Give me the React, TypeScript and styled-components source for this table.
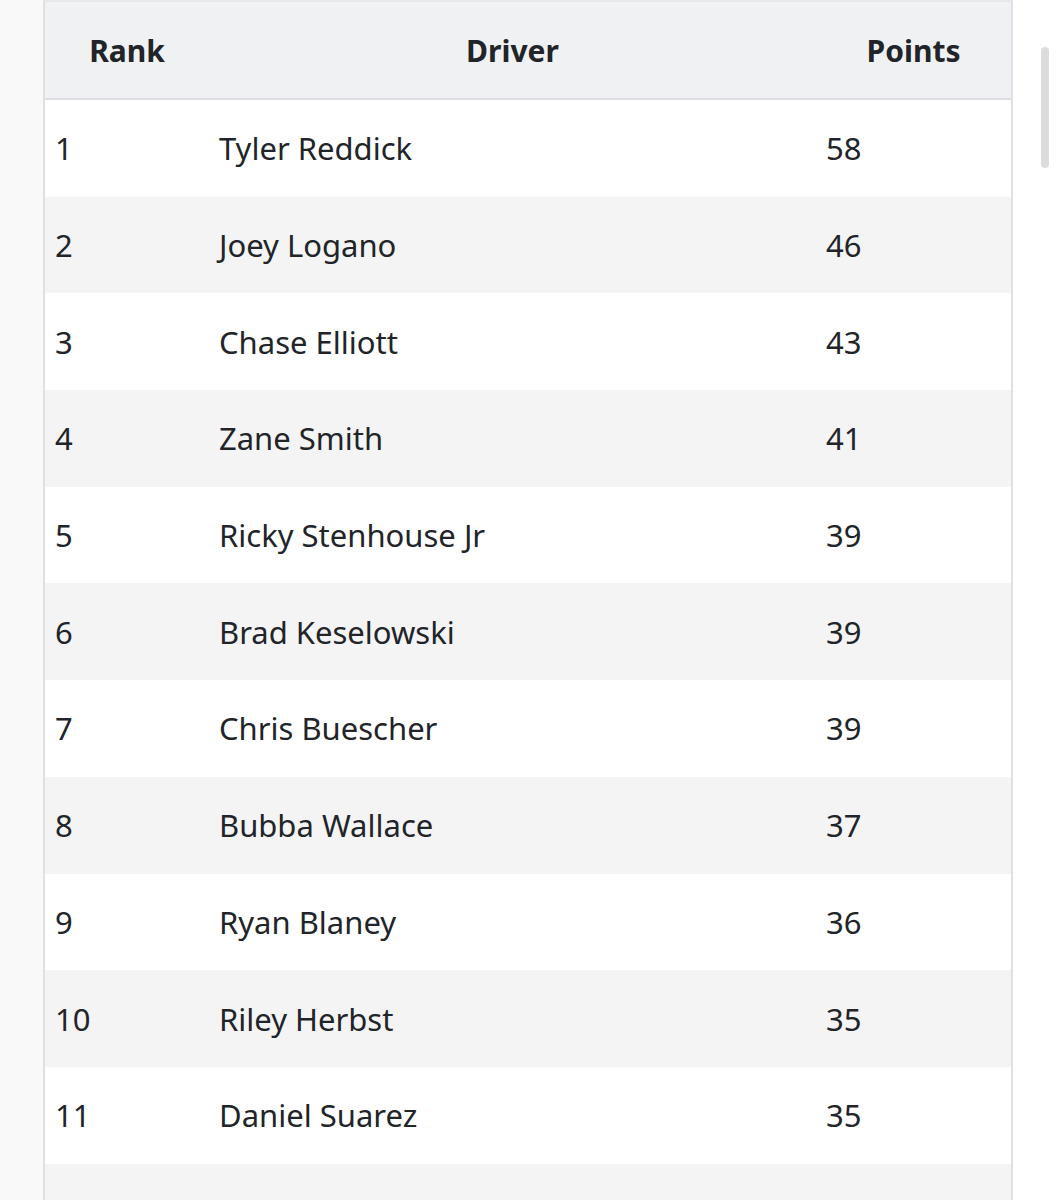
import React from "react";
import styled, { createGlobalStyle } from "styled-components";

const GlobalStyle = createGlobalStyle`
  html, body {
    margin: 0;
    padding: 0;
    background: #ffffff;
    font-family: "Noto Sans", "Open Sans", sans-serif;
  }
`;

const Page = styled.div`
  display: flex;
  height: 1200px;
  overflow: hidden;
`;

const Gutter = styled.div`
  width: 43px;
  flex-shrink: 0;
  background: #f9f9fa;
`;

const Frame = styled.div`
  width: 966px;
  flex-shrink: 0;
  border-left: 2px solid #dfe0e3;
  border-right: 2px solid #dfe0e3;
  border-top: 2px solid #e6e7ea;
`;

const Rail = styled.div`
  flex: 1;
  position: relative;
`;

// scroll thumb sits over the rail
const Thumb = styled.div`
  position: absolute;
  left: 28px;
  top: 47px;
  width: 8px;
  height: 121px;
  border-radius: 4px;
  background: #dcdcdc;
`;

const Table = styled.table`
  width: 100%;
  border-collapse: collapse;
  color: #212428;
`;

const HeadCell = styled.th<{ $w?: number }>`
  height: 96px;
  padding: 0 10px;
  background: #f0f1f3;
  border-bottom: 2px solid #dcdee2;
  font-size: 30px;
  font-weight: 700;
  text-align: center;
  width: ${(p) => (p.$w ? `${p.$w}px` : "auto")};
`;

const Row = styled.tr<{ $alt: boolean }>`
  background: ${(p) => (p.$alt ? "#f4f4f5" : "#ffffff")};
`;

const Cell = styled.td`
  height: 96.7px;
  padding: 0 10px;
  font-size: 31px;
  text-align: left;
  vertical-align: middle;
`;

const standings: [number, string, number][] = [
  [1, "Tyler Reddick", 58],
  [2, "Joey Logano", 46],
  [3, "Chase Elliott", 43],
  [4, "Zane Smith", 41],
  [5, "Ricky Stenhouse Jr", 39],
  [6, "Brad Keselowski", 39],
  [7, "Chris Buescher", 39],
  [8, "Bubba Wallace", 37],
  [9, "Ryan Blaney", 36],
  [10, "Riley Herbst", 35],
  [11, "Daniel Suarez", 35],
];

const App: React.FC = () => {
  return (
    <>
      <GlobalStyle />
      <Page>
        <Gutter />
        <Frame>
          <Table>
            <thead>
              <tr>
                <HeadCell $w={144}>Rank</HeadCell>
                <HeadCell>Driver</HeadCell>
                <HeadCell $w={175}>Points</HeadCell>
              </tr>
            </thead>
            <tbody>
              {standings.map(([rank, name, pts], i) => (
                <Row key={rank} $alt={i % 2 === 1}>
                  <Cell>{rank}</Cell>
                  <Cell>{name}</Cell>
                  <Cell>{pts}</Cell>
                </Row>
              ))}
              {/* next row is scrolled below the fold */}
              <Row $alt>
                <Cell />
                <Cell />
                <Cell />
              </Row>
            </tbody>
          </Table>
        </Frame>
        <Rail>
          <Thumb />
        </Rail>
      </Page>
    </>
  );
};

export default App;
